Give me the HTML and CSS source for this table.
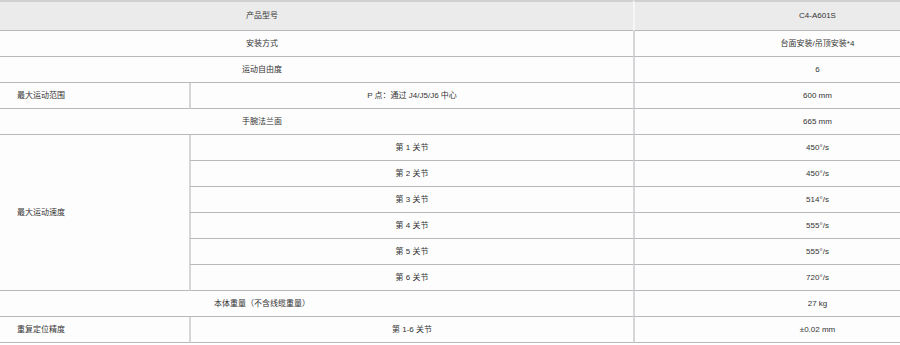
FILE: index.html
```html
<!DOCTYPE html>
<html lang="zh-CN">
<head>
<meta charset="utf-8">
<title>C4-A601S 规格</title>
<link rel="stylesheet" href="styles.css">
</head>
<body>
<div class="frame">
<div class="spec">
  <div class="cell head span2 label">产品型号</div>
  <div class="cell head val">C4-A601S</div>

  <div class="cell span2 label">安装方式</div>
  <div class="cell val">台面安装/吊顶安装<sup class="note">*4</sup></div>

  <div class="cell span2 label">运动自由度</div>
  <div class="cell val">6</div>

  <div class="cell left">最大运动范围</div>
  <div class="cell mid">P 点：通过 J4/J5/J6 中心</div>
  <div class="cell val">600 mm</div>

  <div class="cell span2 label">手腕法兰面</div>
  <div class="cell val">665 mm</div>

  <div class="cell left rows6">最大运动速度</div>
  <div class="cell mid">第 1 关节</div>
  <div class="cell val">450°/s</div>
  <div class="cell mid">第 2 关节</div>
  <div class="cell val">450°/s</div>
  <div class="cell mid">第 3 关节</div>
  <div class="cell val">514°/s</div>
  <div class="cell mid">第 4 关节</div>
  <div class="cell val">555°/s</div>
  <div class="cell mid">第 5 关节</div>
  <div class="cell val">555°/s</div>
  <div class="cell mid">第 6 关节</div>
  <div class="cell val">720°/s</div>

  <div class="cell span2 label">本体重量（不含线缆重量）</div>
  <div class="cell val">27 kg</div>

  <div class="cell left">重复定位精度</div>
  <div class="cell mid">第 1-6 关节</div>
  <div class="cell val">±0.02 mm</div>
</div>
</div>
</body>
</html>
```

FILE: styles.css
```css
html, body {
  margin: 0;
  padding: 0;
  background: #ffffff;
  overflow: hidden;
}

.frame {
  width: 100%;
  overflow: hidden;
}

.spec {
  display: grid;
  grid-template-columns: 189px 444px 367px;
  grid-template-rows: 31px repeat(12, 26px);
  width: 1000px;
  font-family: "Liberation Sans", "Noto Sans CJK SC", Arial, sans-serif;
  font-size: 8px;
  color: #333333;
}

.cell {
  box-sizing: border-box;
  display: flex;
  align-items: center;
  justify-content: center;
  background: #fdfdfd;
  border-bottom: 1px solid #b9b9bd;
  white-space: nowrap;
  line-height: 1;
}

.head {
  background: #ebebeb;
  border-top: 2px solid #d0d0d0;
}

.span2 {
  grid-column: 1 / span 2;
  padding-right: 109px;
}

.left {
  justify-content: flex-start;
  padding-left: 17px;
}

.rows6 {
  grid-row: span 6;
}

.mid {
  border-left: 2px solid #d6d6d8;
}

.val {
  border-left: 2px solid #d6d6d8;
}

.head.val {
  border-left: 2px solid #f6f6f6;
}

.note {
  font-size: 8px;
  vertical-align: 4px;
  line-height: 0;
}
```
